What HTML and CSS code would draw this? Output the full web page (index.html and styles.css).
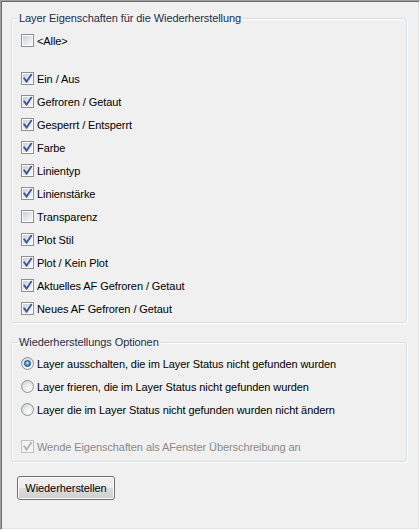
FILE: index.html
```html
<!DOCTYPE html>
<html lang="de">
<head>
<meta charset="utf-8">
<title>Layer Eigenschaften</title>
<link rel="stylesheet" href="styles.css">
</head>
<body>
<div class="window">
  <fieldset class="group g1">
    <legend>Layer Eigenschaften für die Wiederherstellung</legend>
    <div class="list">
      <label class="row"><span class="cb"></span><span>&lt;Alle&gt;</span></label>
      <div class="spacer"></div>
      <label class="row"><span class="cb on"><svg viewBox="0 0 13 13"><path d="M3.2 6.4 L5.6 9.6 L10.2 2.8"/></svg></span><span>Ein / Aus</span></label>
      <label class="row"><span class="cb on"><svg viewBox="0 0 13 13"><path d="M3.2 6.4 L5.6 9.6 L10.2 2.8"/></svg></span><span>Gefroren / Getaut</span></label>
      <label class="row"><span class="cb on"><svg viewBox="0 0 13 13"><path d="M3.2 6.4 L5.6 9.6 L10.2 2.8"/></svg></span><span>Gesperrt / Entsperrt</span></label>
      <label class="row"><span class="cb on"><svg viewBox="0 0 13 13"><path d="M3.2 6.4 L5.6 9.6 L10.2 2.8"/></svg></span><span>Farbe</span></label>
      <label class="row"><span class="cb on"><svg viewBox="0 0 13 13"><path d="M3.2 6.4 L5.6 9.6 L10.2 2.8"/></svg></span><span>Linientyp</span></label>
      <label class="row"><span class="cb on"><svg viewBox="0 0 13 13"><path d="M3.2 6.4 L5.6 9.6 L10.2 2.8"/></svg></span><span>Linienstärke</span></label>
      <label class="row"><span class="cb"></span><span>Transparenz</span></label>
      <label class="row"><span class="cb on"><svg viewBox="0 0 13 13"><path d="M3.2 6.4 L5.6 9.6 L10.2 2.8"/></svg></span><span>Plot Stil</span></label>
      <label class="row"><span class="cb on"><svg viewBox="0 0 13 13"><path d="M3.2 6.4 L5.6 9.6 L10.2 2.8"/></svg></span><span>Plot / Kein Plot</span></label>
      <label class="row"><span class="cb on"><svg viewBox="0 0 13 13"><path d="M3.2 6.4 L5.6 9.6 L10.2 2.8"/></svg></span><span>Aktuelles AF Gefroren / Getaut</span></label>
      <label class="row"><span class="cb on"><svg viewBox="0 0 13 13"><path d="M3.2 6.4 L5.6 9.6 L10.2 2.8"/></svg></span><span>Neues AF Gefroren / Getaut</span></label>
    </div>
  </fieldset>

  <fieldset class="group g2">
    <legend>Wiederherstellungs Optionen</legend>
    <div class="list">
      <label class="row"><span class="rb on"></span><span>Layer ausschalten, die im Layer Status nicht gefunden wurden</span></label>
      <label class="row"><span class="rb"></span><span>Layer frieren, die im Layer Status nicht gefunden wurden</span></label>
      <label class="row"><span class="rb"></span><span>Layer die im Layer Status nicht gefunden wurden nicht ändern</span></label>
      <div class="spacer small"></div>
      <label class="row disabled"><span class="cb on dis"><svg viewBox="0 0 13 13"><path d="M3.2 6.4 L5.6 9.6 L10.2 2.8"/></svg></span><span>Wende Eigenschaften als AFenster Überschreibung an</span></label>
    </div>
  </fieldset>

  <button class="btn" type="button">Wiederherstellen</button>
</div>
</body>
</html>
```

FILE: styles.css
```css
html, body {
  margin: 0;
  padding: 0;
  background: #f0f0f0;
}

.window {
  width: 420px;
  height: 530px;
  box-sizing: border-box;
  background: #f0f0f0;
  border-top: 1px solid #a0a0a0;
  border-left: 1px solid #a0a0a0;
  border-right: 1px solid #ffffff;
  border-bottom: 1px solid #ffffff;
  box-shadow: inset 1px 1px 0 #696969, inset -1px -1px 0 #e3e3e3;
  padding: 10px 10px 0 10px;
  display: flex;
  flex-direction: column;
  align-items: flex-start;
  font-family: "Liberation Sans", Arial, sans-serif;
  font-size: 11px;
  letter-spacing: -0.08px;
  color: #000;
}

.group {
  margin: 0;
  padding: 0;
  width: 396px;
  box-sizing: border-box;
  border: 1px solid #d5dfe5;
  border-radius: 3px;
  box-shadow: inset 1px 1px 0 #ffffff, 1px 1px 0 #ffffff;
  min-width: 0;
}

.group legend {
  margin-left: 6px;
  padding: 0 1px;
  line-height: 14px;
  color: #1b2c48;
}

.g2 {
  margin-top: 12px;
}

.list {
  display: flex;
  flex-direction: column;
  padding: 4px 0 2px 9px;
}

.g2 .list {
  padding: 3px 0 3px 9px;
}

.spacer {
  height: 15px;
}

.spacer.small {
  height: 14px;
}

.row {
  height: 23px;
  display: flex;
  align-items: center;
  gap: 3px;
  white-space: nowrap;
}

.row.disabled {
  color: #8a8a8a;
}

/* checkbox */
.cb {
  position: relative;
  flex: none;
  width: 13px;
  height: 13px;
  box-sizing: border-box;
  border: 1px solid #8e8f8f;
  background: #ffffff;
}

.cb::before {
  content: "";
  position: absolute;
  left: 1px;
  top: 1px;
  width: 9px;
  height: 9px;
  background: linear-gradient(135deg, #c8ccd2 0%, #e2e4e7 45%, #f8f8f8 100%);
}

.cb svg {
  position: absolute;
  left: -1px;
  top: -1px;
  width: 13px;
  height: 13px;
}

.cb svg path {
  fill: none;
  stroke: #3b55a3;
  stroke-width: 1.8;
  stroke-linecap: square;
  stroke-linejoin: miter;
}

.cb.dis {
  border-color: #c0c0c0;
  background: #f4f4f4;
}

.cb.dis::before {
  background: #f4f4f4;
}

.cb.dis svg path {
  stroke: #b4b4b4;
}

/* radio */
.rb {
  position: relative;
  flex: none;
  width: 13px;
  height: 13px;
  box-sizing: border-box;
  border-radius: 50%;
  border: 1px solid #8f9294;
  background: radial-gradient(circle at 65% 70%, #fbfbfb 0%, #e9eaeb 45%, #c7cacd 100%);
}

.rb.on::after {
  content: "";
  position: absolute;
  left: 2px;
  top: 2px;
  width: 7px;
  height: 7px;
  box-sizing: border-box;
  border-radius: 50%;
  border: 1px solid #1a3f7a;
  background: radial-gradient(circle at 45% 40%, #c6ecff 0%, #4ba4e2 45%, #0f4d9c 100%);
}

/* button */
.btn {
  margin: 14px 0 0 6px;
  width: 98px;
  height: 24px;
  padding: 0;
  border: 1px solid #707070;
  border-radius: 3px;
  background: linear-gradient(#f2f2f2 0%, #ebebeb 50%, #dddddd 50%, #cfcfcf 100%);
  box-shadow: inset 0 0 0 1px #fbfbfb;
  font-family: "Liberation Sans", Arial, sans-serif;
  font-size: 11px;
  letter-spacing: -0.08px;
  color: #000;
}
```
